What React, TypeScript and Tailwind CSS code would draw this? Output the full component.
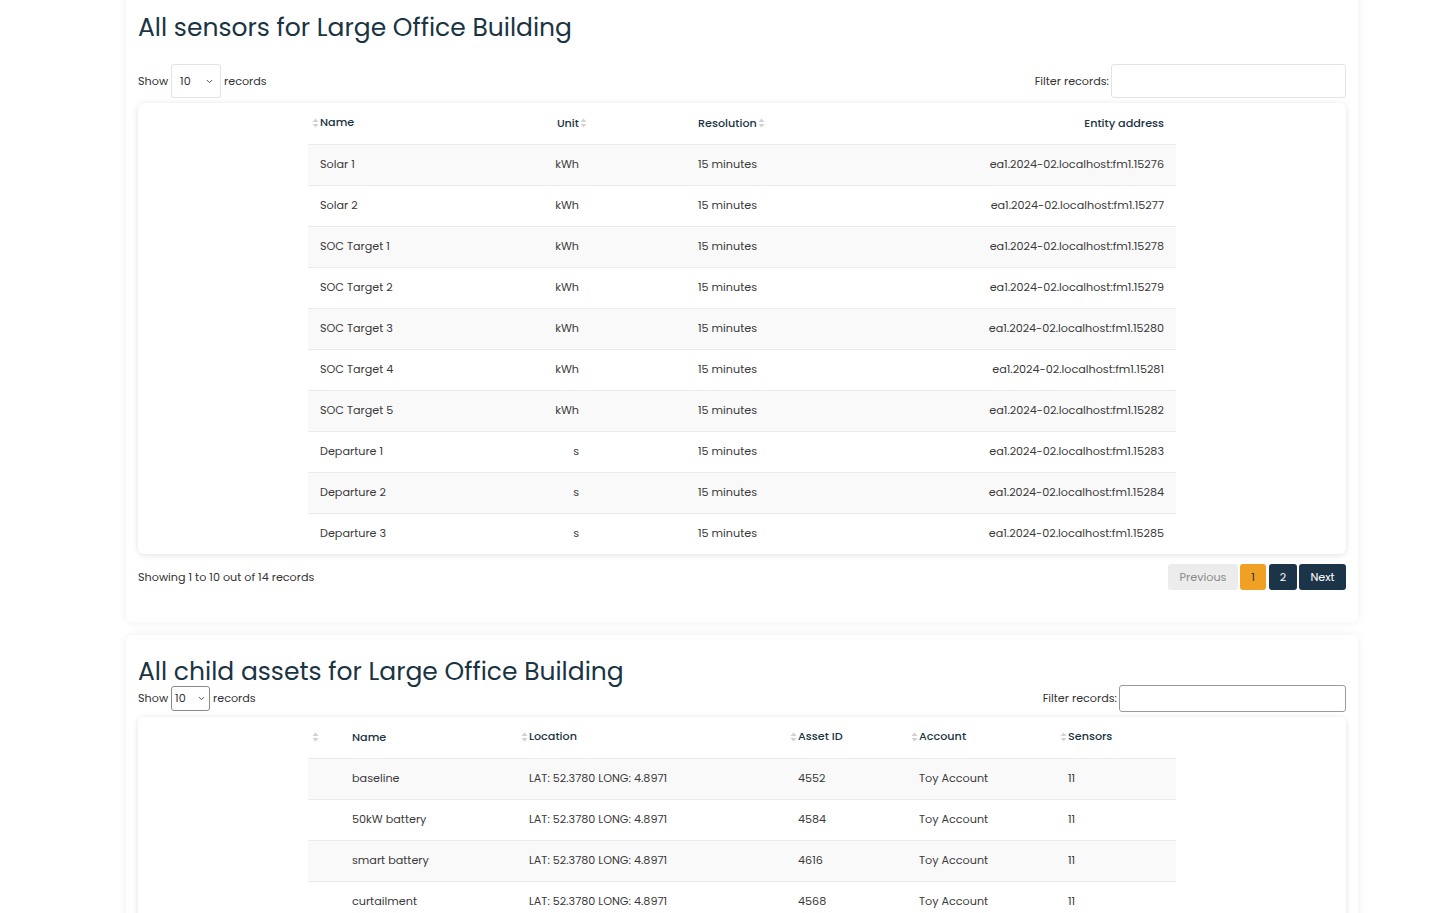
import { ChevronDown } from "lucide-react";

const sensors = [
  ["Solar 1", "kWh", "15276"],
  ["Solar 2", "kWh", "15277"],
  ["SOC Target 1", "kWh", "15278"],
  ["SOC Target 2", "kWh", "15279"],
  ["SOC Target 3", "kWh", "15280"],
  ["SOC Target 4", "kWh", "15281"],
  ["SOC Target 5", "kWh", "15282"],
  ["Departure 1", "s", "15283"],
  ["Departure 2", "s", "15284"],
  ["Departure 3", "s", "15285"],
];

const assets = [
  ["baseline", "4552"],
  ["50kW battery", "4584"],
  ["smart battery", "4616"],
  ["curtailment", "4568"],
  ["heat pump", "4600"],
];

const SortIcon = () => (
  <svg width="7" height="10" viewBox="0 0 7 10" className="shrink-0">
    <path d="M3.5 0.5 L6.5 4 L0.5 4 Z" fill="#d2d2d2" />
    <path d="M3.5 9.5 L6.5 6 L0.5 6 Z" fill="#d2d2d2" />
  </svg>
);

const ShowSelect = ({ small }: { small?: boolean }) => (
  <div
    className={
      small
        ? "flex items-center justify-between w-[39px] h-[25px] px-[3px] border border-[#8a8a8a] rounded-[3px] bg-white"
        : "flex items-center justify-between w-[50px] h-[34px] pl-2 pr-[6px] border border-[#e3e3e3] rounded-[3px] bg-white"
    }
  >
    <span>10</span>
    <ChevronDown size={9} strokeWidth={2.5} className="text-[#444]" />
  </div>
);

const Pager = () => (
  <div className="flex items-center gap-[2px] text-[11.2px]">
    <button className="h-[26px] w-[70px] rounded-[3px] bg-[#ececec] text-[#8a8a8a]">Previous</button>
    <button className="h-[26px] w-[26px] rounded-[3px] bg-[#f0a023] text-[#1a3443]">1</button>
    <button className="h-[26px] w-[28px] rounded-[3px] bg-[#1c3447] text-white ml-[1px]">2</button>
    <button className="h-[26px] w-[47px] rounded-[3px] bg-[#1c3447] text-white">Next</button>
  </div>
);

export default function App() {
  return (
    <div
      className="min-h-screen bg-white text-[11.2px] text-[#3a3a3a] overflow-hidden"
      style={{ fontFamily: "Poppins, Inter, 'Noto Sans', sans-serif" }}
    >
      <div className="ml-[126px] w-[1232px] flex flex-col gap-[13px]">
        {/* sensors card */}
        <section className="-mt-[10px] bg-white rounded-md shadow-[0_0_10px_rgba(0,0,0,0.07)] px-3 pt-[21px] pb-[32px]">
          <h2 className="text-[25px] leading-[34px] text-[#1a3443]">
            All sensors for Large Office Building
          </h2>
          <div className="flex items-center justify-between mt-[19px] text-[#333]">
            <div className="flex items-center gap-[3px]">
              <span>Show</span>
              <ShowSelect />
              <span>records</span>
            </div>
            <div className="flex items-center gap-[2px]">
              <span>Filter records:</span>
              <div className="w-[235px] h-[34px] border border-[#e3e3e3] rounded-[3px] bg-white" />
            </div>
          </div>
          <div className="mt-[5px] bg-white rounded-md shadow-[0_1px_6px_rgba(0,0,0,0.12)]">
            <table className="mx-auto w-[868px] table-fixed border-collapse">
              <colgroup>
                <col className="w-[236px]" />
                <col className="w-[47px]" />
                <col className="w-[309px]" />
                <col className="w-[276px]" />
              </colgroup>
              <thead>
                <tr className="h-[41px] text-[#1a3443]">
                  <th className="pl-3 text-left font-medium">
                    <span className="inline-flex items-center gap-[1px] -ml-2">
                      <SortIcon />
                      Name
                    </span>
                  </th>
                  <th className="pr-3 text-right font-medium">
                    <span className="inline-flex items-center gap-[1px] -mr-2">
                      Unit
                      <SortIcon />
                    </span>
                  </th>
                  <th className="pl-[107px] text-left font-medium">
                    <span className="inline-flex items-center gap-[1px]">
                      Resolution
                      <SortIcon />
                    </span>
                  </th>
                  <th className="pr-3 text-right font-medium">Entity address</th>
                </tr>
              </thead>
              <tbody>
                {sensors.map((s, i) => (
                  <tr key={s[0]} className={`h-[41px] border-t border-[#ebebeb] ${i % 2 === 0 ? "bg-[#f9f9f9]" : "bg-white"}`}>
                    <td className="pl-3">{s[0]}</td>
                    <td className="pr-3 text-right">{s[1]}</td>
                    <td className="pl-[107px]">15 minutes</td>
                    <td className="pr-3 text-right">ea1.2024-02.localhost:fm1.{s[2]}</td>
                  </tr>
                ))}
              </tbody>
            </table>
          </div>
          <div className="flex items-center justify-between mt-[10px]">
            <span className="text-[#333]">Showing 1 to 10 out of 14 records</span>
            <Pager />
          </div>
        </section>

        {/* child assets card */}
        <section className="bg-white rounded-md shadow-[0_0_10px_rgba(0,0,0,0.07)] px-3 pt-[24px] pb-8">
          <h2 className="text-[25px] leading-[26px] text-[#1a3443]">
            All child assets for Large Office Building
          </h2>
          <div className="flex items-center justify-between text-[#333]">
            <div className="flex items-center gap-[3px]">
              <span>Show</span>
              <ShowSelect small />
              <span>records</span>
            </div>
            <div className="flex items-center gap-[2px]">
              <span>Filter records:</span>
              <div className="w-[227px] h-[27px] border border-[#9a9a9a] rounded-[3px] bg-white" />
            </div>
          </div>
          <div className="mt-[5px] bg-white rounded-md shadow-[0_1px_6px_rgba(0,0,0,0.12)]">
            <table className="mx-auto w-[868px] table-fixed border-collapse">
              <colgroup>
                <col className="w-[32px]" />
                <col className="w-[177px]" />
                <col className="w-[269px]" />
                <col className="w-[121px]" />
                <col className="w-[149px]" />
                <col className="w-[120px]" />
              </colgroup>
              <thead>
                <tr className="h-[41px] text-[#1a3443]">
                  <th className="pl-1 text-left font-medium">
                    <SortIcon />
                  </th>
                  <th className="pl-3 text-left font-medium">Name</th>
                  {["Location", "Asset ID", "Account", "Sensors"].map((h) => (
                    <th key={h} className="pl-3 text-left font-medium">
                      <span className="inline-flex items-center gap-[1px] -ml-2">
                        <SortIcon />
                        {h}
                      </span>
                    </th>
                  ))}
                </tr>
              </thead>
              <tbody>
                {assets.map((a, i) => (
                  <tr key={a[0]} className={`h-[41px] border-t border-[#ebebeb] ${i % 2 === 0 ? "bg-[#f9f9f9]" : "bg-white"}`}>
                    <td />
                    <td className="pl-3">{a[0]}</td>
                    <td className="pl-3">LAT: 52.3780 LONG: 4.8971</td>
                    <td className="pl-3">{a[1]}</td>
                    <td className="pl-3">Toy Account</td>
                    <td className="pl-3">11</td>
                  </tr>
                ))}
              </tbody>
            </table>
          </div>
        </section>
      </div>
    </div>
  );
}
